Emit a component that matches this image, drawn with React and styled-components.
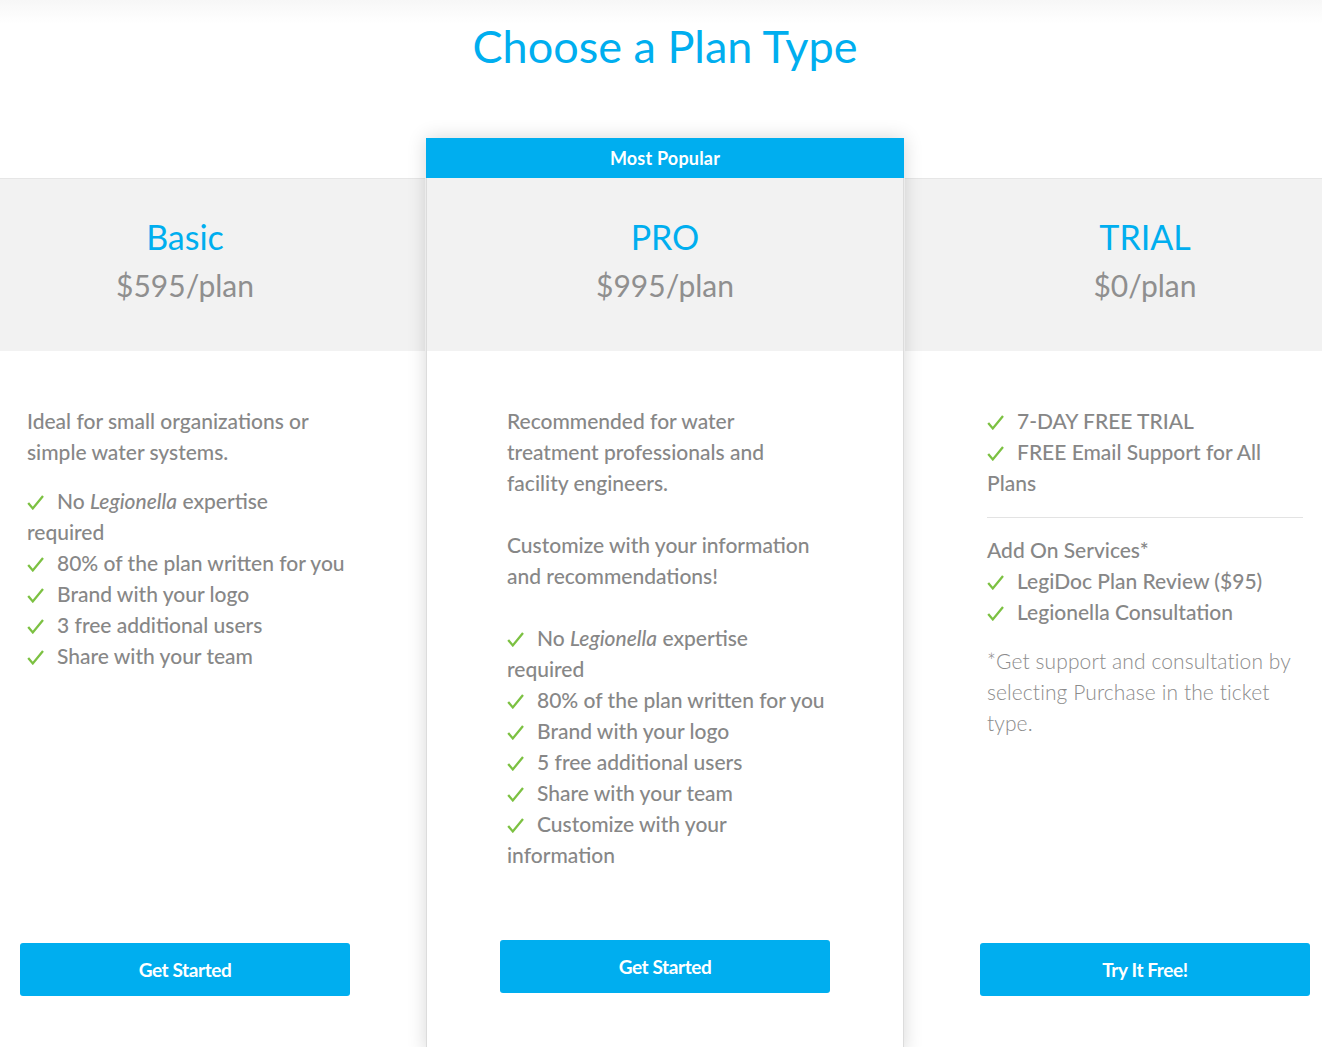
import React from 'react';
import styled, { createGlobalStyle } from 'styled-components';

const GlobalStyle = createGlobalStyle`
  html, body {
    margin: 0;
    padding: 0;
  }
  body {
    font-family: Lato, "Open Sans", sans-serif;
    background: linear-gradient(#f7f7f7 0, #ffffff 24px) no-repeat, #ffffff;
    overflow-x: hidden;
  }
  * { box-sizing: border-box; }
`;

const Page = styled.div`
  width: 1440px;
  margin-left: -55px;
`;

const Title = styled.h1`
  margin: 0;
  height: 138px;
  padding-top: 19px;
  text-align: center;
  font-size: 45px;
  font-weight: 400;
  line-height: 55px;
  color: #00aeef;
`;

const Plans = styled.div`
  display: grid;
  grid-template-columns: repeat(3, 480px);
  align-items: start;
`;

const Column = styled.div`
  margin: ${({ $featured }) => ($featured ? '0 1px' : '40px 0 0')};
  padding-bottom: 60px;
  background: #fff;
  ${({ $featured }) =>
    $featured &&
    `
    position: relative;
    z-index: 1;
    border-left: 1px solid #dcdcdc;
    border-right: 1px solid #dcdcdc;
    box-shadow: 0 0 18px rgba(0, 0, 0, 0.16);
  `}
`;

const PopularBar = styled.div`
  height: 40px;
  margin: 0 -1px;
  background: #00aeef;
  color: #fff;
  font-size: 18px;
  font-weight: 700;
  line-height: 40px;
  text-align: center;
  letter-spacing: 0.2px;
`;

const Header = styled.div`
  height: 173px;
  padding-top: ${({ $featured }) => ($featured ? '39px' : '38px')};
  border-top: ${({ $featured }) => ($featured ? 'none' : '1px solid #e6e6e6')};
  background: #f2f2f2;
  text-align: center;
`;

const PlanName = styled.h2`
  margin: 0;
  font-size: 34px;
  font-weight: 400;
  line-height: 40px;
  color: #00aeef;
`;

const Price = styled.div`
  margin-top: 8px;
  font-size: 30px;
  font-weight: 400;
  line-height: 40px;
  color: #8f8f8f;
`;

const Body = styled.div`
  width: 330px;
  height: ${({ $height }) => $height}px;
  margin: 0 auto;
  padding: 54px 0 0 7px;
  font-size: 21px;
  font-weight: 500;
  line-height: 31px;
  color: #878787;
`;

const Text = styled.p`
  margin: 0 0 ${({ $gap }) => $gap}px;
`;

const List = styled.ul`
  margin: 0 0 ${({ $gap }) => $gap}px;
  padding: 0;
  list-style: none;
`;

const Item = styled.li`
  margin: 0;
`;

const Tick = styled.svg`
  display: inline-block;
  width: 17px;
  height: 15px;
  margin-right: 13px;
  vertical-align: -1px;
`;

const Divider = styled.hr`
  margin: 19px 7px 16px 0;
  border: 0;
  border-top: 1px solid #e3e3e3;
`;

const Footnote = styled.p`
  margin: 0;
  font-weight: 300;
  letter-spacing: 0.1px;
  color: #8c8c8c;
`;

const Button = styled.a`
  display: block;
  width: 330px;
  height: 53px;
  margin: 0 auto;
  border-radius: 3px;
  background: #00aeef;
  color: #fff;
  font-size: 19px;
  font-weight: 700;
  line-height: 53px;
  text-align: center;
  letter-spacing: -0.4px;
  text-decoration: none;
  cursor: pointer;
`;

const Check = ({ children }) => (
  <Item>
    <Tick viewBox="0 0 17 15">
      <path d="M1.2 8 L5.8 13.4 L16 1" fill="none" stroke="#7cc142" strokeWidth="2.3" />
    </Tick>
    {children}
  </Item>
);

export default function App() {
  return (
    <>
      <GlobalStyle />
      <Page>
        <Title>Choose a Plan Type</Title>
        <Plans>
          <Column>
            <Header>
              <PlanName>Basic</PlanName>
              <Price>$595/plan</Price>
            </Header>
            <Body $height={592}>
              <Text $gap={18}>Ideal for small organizations or simple water systems.</Text>
              <List $gap={0}>
                <Check>No <em>Legionella</em> expertise required</Check>
                <Check>80% of the plan written for you</Check>
                <Check>Brand with your logo</Check>
                <Check>3 free additional users</Check>
                <Check>Share with your team</Check>
              </List>
            </Body>
            <Button>Get Started</Button>
          </Column>

          <Column $featured>
            <PopularBar>Most Popular</PopularBar>
            <Header $featured>
              <PlanName>PRO</PlanName>
              <Price>$995/plan</Price>
            </Header>
            <Body $height={589}>
              <Text $gap={31}>Recommended for water treatment professionals and facility engineers.</Text>
              <Text $gap={31}>Customize with your information and recommendations!</Text>
              <List $gap={0}>
                <Check>No <em>Legionella</em> expertise required</Check>
                <Check>80% of the plan written for you</Check>
                <Check>Brand with your logo</Check>
                <Check>5 free additional users</Check>
                <Check>Share with your team</Check>
                <Check>Customize with your information</Check>
              </List>
            </Body>
            <Button>Get Started</Button>
          </Column>

          <Column>
            <Header>
              <PlanName>TRIAL</PlanName>
              <Price>$0/plan</Price>
            </Header>
            <Body $height={592}>
              <List $gap={0}>
                <Check>7-DAY FREE TRIAL</Check>
                <Check>FREE Email Support for All Plans</Check>
              </List>
              <Divider />
              <Text $gap={0}>Add On Services*</Text>
              <List $gap={18}>
                <Check>LegiDoc Plan Review ($95)</Check>
                <Check>Legionella Consultation</Check>
              </List>
              <Footnote>*Get support and consultation by selecting Purchase in the ticket type.</Footnote>
            </Body>
            <Button>Try It Free!</Button>
          </Column>
        </Plans>
      </Page>
    </>
  );
}
